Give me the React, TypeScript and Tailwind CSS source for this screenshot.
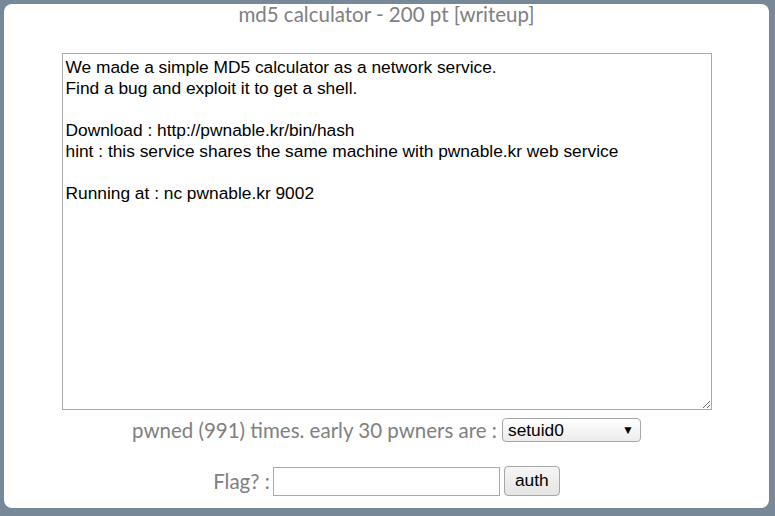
export default function App() {
  const desc = `We made a simple MD5 calculator as a network service.
Find a bug and exploit it to get a shell.

Download : http://pwnable.kr/bin/hash
hint : this service shares the same machine with pwnable.kr web service

Running at : nc pwnable.kr 9002`;

  return (
    <div className="h-[516px] w-[775px] bg-[#778899] p-[4px] pr-[6px] pb-[8px]">
      <div className="flex h-full flex-col items-center rounded-lg bg-white font-['Lato',sans-serif] text-[20.5px] text-[#808080]">
        <h1 className="leading-[21px]">md5 calculator - 200 pt [writeup]</h1>

        <textarea
          readOnly
          defaultValue={desc}
          className="mt-[28px] h-[357px] w-[650px] shrink-0 resize border border-[#a9a9a9] pt-[3px] pr-[2px] pb-[2px] pl-[3px] font-['Liberation_Sans',Arial,sans-serif] text-[17.33px] leading-[21px] text-black outline-none"
        />

        <div className="mt-[8px] flex h-[24px] items-center">
          <span>pwned (991) times. early 30 pwners are :</span>
          <div className="relative ml-[5px] h-[24px] w-[139px] rounded-sm border border-[#a6a6a6] bg-gradient-to-b from-white to-[#ececec] font-['Liberation_Sans',Arial,sans-serif] text-[17.33px] leading-[22px] text-black">
            <span className="pl-[5px]">setuid0</span>
            <span className="absolute right-[6px] top-0 text-[12px] leading-[22px]">▼</span>
          </div>
        </div>

        <div className="mt-[24px] flex h-[30px] items-center">
          <span>Flag? :</span>
          <input
            type="text"
            className="ml-[3px] h-[29px] w-[227px] border border-[#a9a9a9] bg-white px-[2px] outline-none"
          />
          <button
            type="button"
            className="ml-[4px] h-[30px] w-[56px] rounded-sm border border-[#a6a6a6] bg-gradient-to-b from-[#f6f6f6] to-[#e4e4e4] font-['Liberation_Sans',Arial,sans-serif] text-[17.33px] text-black"
          >
            auth
          </button>
        </div>
      </div>
    </div>
  );
}
